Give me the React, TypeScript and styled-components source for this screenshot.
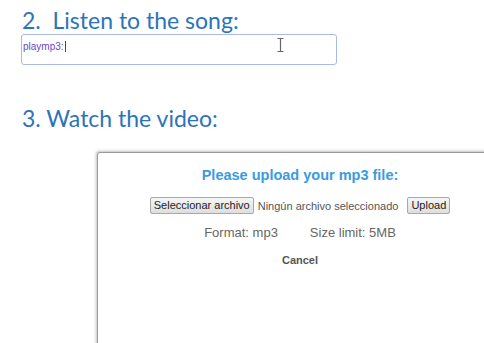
import styled, { createGlobalStyle } from 'styled-components'

const GlobalStyle = createGlobalStyle`
  html, body {
    margin: 0;
    background: #ffffff;
    overflow: hidden;
  }
`

const Page = styled.div`
  width: 484px;
  height: 343px;
  overflow: hidden;
  padding: 6px 0 0 21px;
  box-sizing: border-box;
`

const StepHeading = styled.h2`
  margin: 0;
  font-family: "Comic Sans MS", Lato, sans-serif;
  font-weight: normal;
  font-size: 23px;
  line-height: 28px;
  color: #2c74b9;
  padding-left: 1px;
  white-space: pre;
`

const InputWrap = styled.div`
  position: relative;
  width: 316px;
  height: 31px;
  box-sizing: border-box;
  border: 1.5px solid #a9bbe3;
  border-radius: 3px;
  padding: 1px 1px;
`

const InputText = styled.span`
  font-family: "Liberation Sans", Arial, sans-serif;
  font-size: 10px;
  line-height: 11px;
  color: #6a48c8;
  border-right: 1px solid #4a3a9a;
  padding-right: 1px;
`

const IBeam = styled.svg`
  position: absolute;
  left: 255px;
  top: 3px;
`

const Spacer = styled.div<{ $h: number }>`
  height: ${p => p.$h}px;
`

const Modal = styled.div`
  margin-left: 76px;
  width: 406px;
  height: 220px;
  box-sizing: border-box;
  border: 1px solid #9a9a9a;
  border-radius: 3px;
  box-shadow: -1px -1px 3px rgba(0, 0, 0, 0.25);
  background: #fff;
  display: flex;
  flex-direction: column;
  align-items: center;
  padding-top: 13px;
  font-family: "Liberation Sans", Arial, sans-serif;
`

const ModalTitle = styled.div`
  font-size: 14.5px;
  font-weight: bold;
  color: #3a9be0;
  line-height: 18px;
`

const FileRow = styled.div`
  display: flex;
  align-items: center;
  margin-top: 13px;
  font-size: 11px;
  color: #555;
`

const Btn = styled.button`
  font-family: "Liberation Sans", Arial, sans-serif;
  font-size: 11px;
  color: #222;
  height: 17px;
  padding: 0 3px;
  border: 1px solid #a8a8a8;
  border-radius: 2px;
  background: linear-gradient(#f6f6f6, #dedede);
  line-height: 15px;
`

const FileName = styled.span`
  margin: 0 9px 0 4px;
`

const InfoRow = styled.div`
  display: flex;
  gap: 32px;
  margin-top: 11px;
  font-size: 13px;
  color: #666;
`

const Cancel = styled.div`
  margin-top: 14px;
  font-size: 11px;
  font-weight: bold;
  color: #555;
`

export default function App() {
  return (
    <>
      <GlobalStyle />
      <Page>
        <StepHeading>{'2.  Listen to the song:'}</StepHeading>
        <InputWrap>
          <InputText>playmp3:</InputText>
          <IBeam width="7" height="14" viewBox="0 0 7 14">
            <path d="M0.5 0.5h6M3.5 0.5v13M0.5 13.5h6" stroke="#666" strokeWidth="1.2" fill="none" />
          </IBeam>
        </InputWrap>
        <Spacer $h={39} />
        <StepHeading>3. Watch the video:</StepHeading>
        <Spacer $h={20} />
        <Modal>
          <ModalTitle>Please upload your mp3 file:</ModalTitle>
          <FileRow>
            <Btn>Seleccionar archivo</Btn>
            <FileName>Ningún archivo seleccionado</FileName>
            <Btn>Upload</Btn>
          </FileRow>
          <InfoRow>
            <span>Format: mp3</span>
            <span>Size limit: 5MB</span>
          </InfoRow>
          <Cancel>Cancel</Cancel>
        </Modal>
      </Page>
    </>
  )
}
